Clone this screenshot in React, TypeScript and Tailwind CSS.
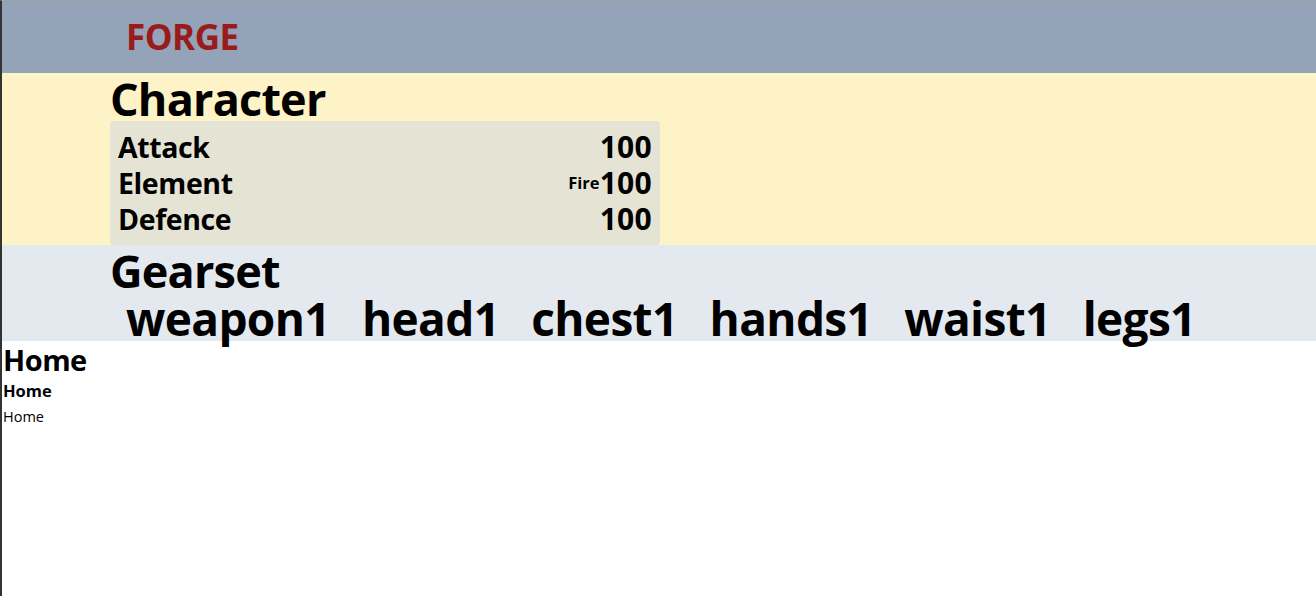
const stats = [
  { name: "Attack", value: 100 },
  { name: "Element", value: 100, tag: "Fire" },
  { name: "Defence", value: 100 },
];

const gear = ["weapon1", "head1", "chest1", "hands1", "waist1", "legs1"];

export default function App() {
  return (
    <div className="min-h-[596px] border-l-2 border-t border-l-[#333333] border-t-[#a3a3a3] bg-white font-['Open_Sans',sans-serif] text-black">
      <header className="flex h-[72px] items-center bg-[#94a3b8] pl-[124px]">
        <span className="text-[35px] font-bold tracking-[-0.5px] text-[#991b1b]">FORGE</span>
      </header>

      <section className="bg-[#fef3c7] pl-[108px]">
        <h1 className="pt-[3px] text-[45px] leading-[45px] font-bold tracking-[-0.8px]">Character</h1>
        <div className="w-[550px] rounded bg-[#e5e4d4] px-2 py-2">
          {stats.map((s) => (
            <div key={s.name} className="flex h-9 items-center justify-between text-[28.5px] leading-9 font-bold tracking-[-0.4px]">
              <span>{s.name}</span>
              <span className="flex items-center">
                {s.tag && <span className="text-[16.5px] leading-5 tracking-normal">{s.tag}</span>}
                <span className="text-[30px] leading-9 tracking-[0.3px]">{s.value}</span>
              </span>
            </div>
          ))}
        </div>
      </section>

      <section className="bg-[#e4e9f0] pl-[108px]">
        <h2 className="pt-[3px] text-[45px] leading-[45px] font-bold tracking-[-0.8px]">Gearset</h2>
        <div className="flex h-[48px] items-end">
          {gear.map((g) => (
            <span key={g} className="px-4 text-[46px] leading-[46px] font-bold tracking-[-0.65px]">
              {g}
            </span>
          ))}
        </div>
      </section>

      <div className="pl-px">
        <h1 className="text-[29px] leading-[38px] font-bold tracking-[-0.5px]">Home</h1>
        <h2 className="text-[16.5px] leading-[24px] font-bold">Home</h2>
        <p className="text-[14.5px] leading-[27px]">Home</p>
      </div>
    </div>
  );
}
